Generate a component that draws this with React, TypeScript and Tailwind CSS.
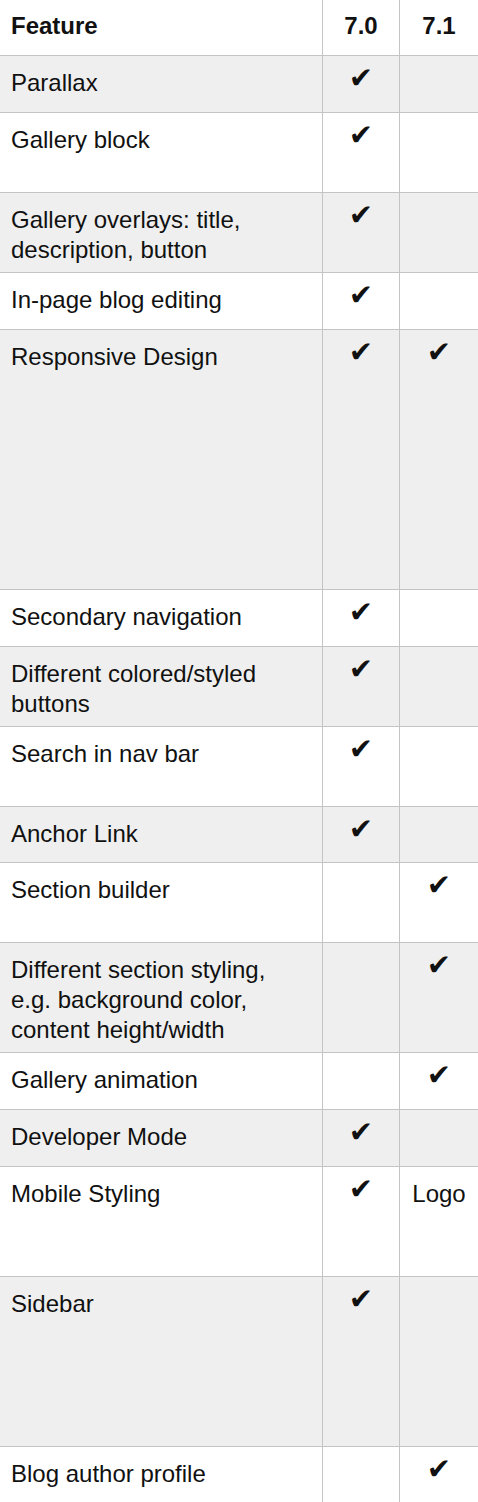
import React from 'react';

type Row = {
  feature: string[];
  v70?: string;
  v71?: string;
  h: string;
};

const CHECK = '\u2714\uFE0E';

const rows: Row[] = [
  { feature: ['Parallax'], v70: CHECK, h: 'h-[57px]' },
  { feature: ['Gallery block'], v70: CHECK, h: 'h-[80px]' },
  { feature: ['Gallery overlays: title,', 'description, button'], v70: CHECK, h: 'h-[80px]' },
  { feature: ['In-page blog editing'], v70: CHECK, h: 'h-[57px]' },
  { feature: ['Responsive Design'], v70: CHECK, v71: CHECK, h: 'h-[260px]' },
  { feature: ['Secondary navigation'], v70: CHECK, h: 'h-[57px]' },
  { feature: ['Different colored/styled', 'buttons'], v70: CHECK, h: 'h-[80px]' },
  { feature: ['Search in nav bar'], v70: CHECK, h: 'h-[80px]' },
  { feature: ['Anchor Link'], v70: CHECK, h: 'h-[56px]' },
  { feature: ['Section builder'], v71: CHECK, h: 'h-[80px]' },
  {
    feature: ['Different section styling,', 'e.g. background color,', 'content height/width'],
    v71: CHECK,
    h: 'h-[110px]',
  },
  { feature: ['Gallery animation'], v71: CHECK, h: 'h-[57px]' },
  { feature: ['Developer Mode'], v70: CHECK, h: 'h-[57px]' },
  { feature: ['Mobile Styling'], v70: CHECK, v71: 'Logo', h: 'h-[110px]' },
  { feature: ['Sidebar'], v70: CHECK, h: 'h-[170px]' },
  { feature: ['Blog author profile'], v71: CHECK, h: 'h-[56px]' },
];

const Value: React.FC<{ value?: string }> = ({ value }) => {
  if (!value) return null;
  if (value === CHECK) {
    return (
      <span className="block pt-[8px] text-[29px] leading-[28px] font-['DejaVu_Sans',sans-serif]">
        {value}
      </span>
    );
  }
  return <span className="block pt-[12px] text-[24px] leading-[30px]">{value}</span>;
};

export default function App() {
  return (
    <div className="w-[478px] bg-white text-[#111] font-['Liberation_Sans',Arial,sans-serif]">
      <div className="grid grid-cols-[322px_77px_79px] h-[56px] border-b border-[#c4c4c4] font-bold text-[24px] leading-[30px]">
        <div className="pl-[11px] pt-[11px]">Feature</div>
        <div className="border-l border-[#c4c4c4] pt-[11px] text-center">7.0</div>
        <div className="border-l border-[#c4c4c4] pt-[11px] text-center">7.1</div>
      </div>
      {rows.map((row, idx) => (
        <div
          key={idx}
          className={`grid grid-cols-[322px_77px_79px] ${row.h} border-b border-[#c4c4c4] ${
            idx % 2 === 0 ? 'bg-[#efefef]' : 'bg-white'
          }`}
        >
          <div className="pl-[11px] pt-[12px] text-[24px] leading-[30px]">
            {row.feature.map((line, i) => (
              <div key={i}>{line}</div>
            ))}
          </div>
          <div className="border-l border-[#c4c4c4] text-center">
            <Value value={row.v70} />
          </div>
          <div className="border-l border-[#c4c4c4] text-center">
            <Value value={row.v71} />
          </div>
        </div>
      ))}
    </div>
  );
}
